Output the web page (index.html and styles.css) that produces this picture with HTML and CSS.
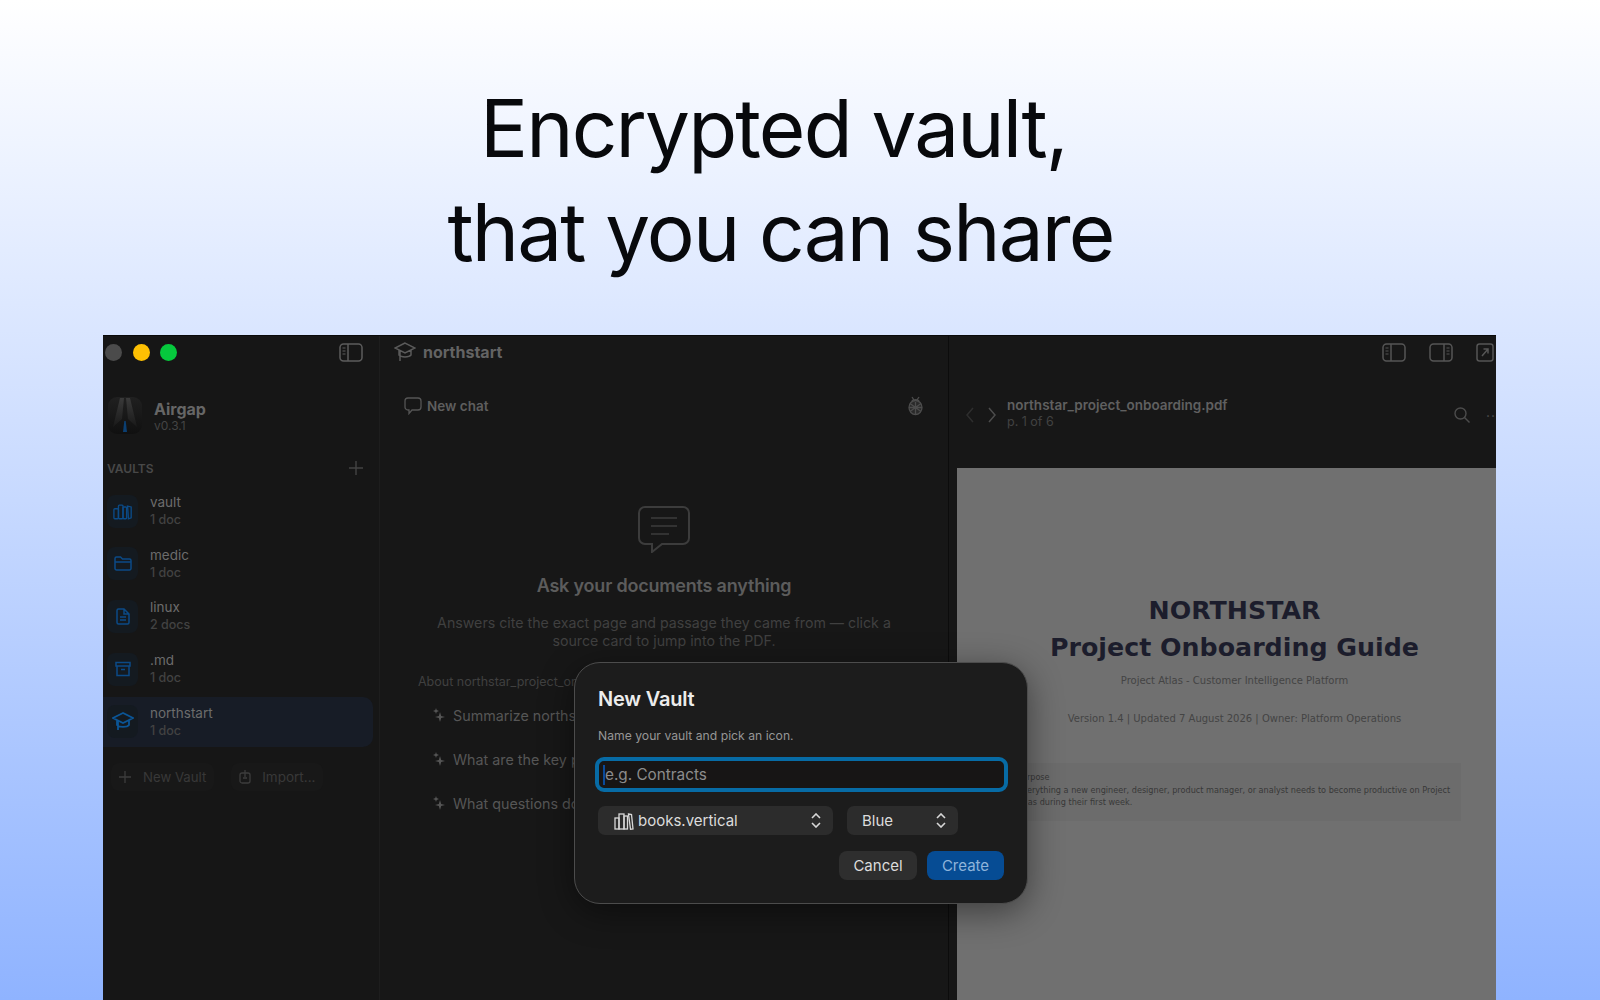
FILE: index.html
```html
<!DOCTYPE html>
<html lang="en">
<head>
<meta charset="utf-8">
<title>Airgap - Encrypted vault</title>
<link rel="stylesheet" href="styles.css">
</head>
<body>
<header class="hero">
  <h1><span class="line-one">Encrypted vault,</span><span class="line-two">that you can share</span></h1>
</header>
<main class="window">
  <aside class="sidebar">
    <div class="titlebar">
      <div class="lights"><i class="light gray"></i><i class="light yellow"></i><i class="light green"></i></div>
      <svg class="tool" width="24" height="19" viewBox="0 0 24 19" fill="none" stroke="#5c5c5c" stroke-width="1.5"><rect x="1" y="1" width="22" height="17" rx="3.5"/><path d="M9 1v17"/><path d="M3.5 5h3M3.5 8h3M3.5 11h3" stroke-width="1.2"/></svg>
    </div>
    <div class="brand">
      <svg class="logo" width="36" height="38" viewBox="0 0 36 38"><defs><linearGradient id="lg" x1="0" y1="0" x2="0" y2="1"><stop offset="0" stop-color="#202020"/><stop offset="1" stop-color="#101010"/></linearGradient><linearGradient id="beam" x1="0" y1="0" x2="0" y2="1"><stop offset="0" stop-color="#3a3a3a"/><stop offset="1" stop-color="#191919"/></linearGradient></defs><rect x="1" y="0" width="34" height="37" rx="9" fill="url(#lg)"/><path d="M13 1 6 30l9-8 2-21z" fill="url(#beam)"/><path d="M23 1l7 29-9-8-2-21z" fill="url(#beam)"/><path d="M17.300 24h1.400l1.300 11h-4z" fill="#0b3f72"/></svg>
      <div class="brand-text"><strong>Airgap</strong><span>v0.3.1</span></div>
    </div>
    <div class="section-head"><span>VAULTS</span><svg width="14" height="14" viewBox="0 0 14 14" stroke="#434343" stroke-width="1.4"><path d="M7 0v14M0 7h14"/></svg></div>
    <ul class="vaults">
      <li class="vault">
        <span class="vault-icon"><svg width="20" height="17" viewBox="0 0 22 18" fill="none" stroke="#0b4a86" stroke-width="1.500"><rect x="1" y="6" width="5" height="11" rx="1"/><rect x="6" y="2" width="5" height="15" rx="1"/><rect x="11" y="4" width="4" height="13" rx="1"/><path d="m16 3 4 1 0 12-3 1z"/></svg></span>
        <span class="vault-text"><b>vault</b><small>1 doc</small></span>
      </li>
      <li class="vault">
        <span class="vault-icon"><svg width="18" height="15" viewBox="0 0 18 15" fill="none" stroke="#0b4a86" stroke-width="1.500"><path d="M1 4V2.500A1.500 1.500 0 0 1 2.500 1h4l2 2h7A1.500 1.500 0 0 1 17 4.500v8a1.500 1.500 0 0 1-1.500 1.500h-13A1.500 1.500 0 0 1 1 12.500zM1 6h16"/></svg></span>
        <span class="vault-text"><b>medic</b><small>1 doc</small></span>
      </li>
      <li class="vault">
        <span class="vault-icon"><svg width="14" height="17" viewBox="0 0 14 17" fill="none" stroke="#0b4a86" stroke-width="1.500"><path d="M2.500 1H8l5 5v8.500a1.500 1.500 0 0 1-1.500 1.500h-9A1.500 1.500 0 0 1 1 14.500v-12A1.500 1.500 0 0 1 2.500 1zM8 1v5h5M4 9h6M4 12h6"/></svg></span>
        <span class="vault-text"><b>linux</b><small>2 docs</small></span>
      </li>
      <li class="vault">
        <span class="vault-icon"><svg width="16" height="16" viewBox="0 0 16 16" fill="none" stroke="#0b4a86" stroke-width="1.500"><path d="M1 1.500h14V5H1zM2 5v9.500h12V5M6 8.500h4"/></svg></span>
        <span class="vault-text"><b>.md</b><small>1 doc</small></span>
      </li>
      <li class="vault selected">
        <span class="vault-icon"><svg width="22" height="19" viewBox="0 0 22 19" fill="none" stroke="#0b5596" stroke-width="1.800"><path d="M11 1 1 6l10 5 10-5zM5 8.500V13c2 2.500 10 2.500 12 0V8.500M6 9v9"/></svg></span>
        <span class="vault-text"><b>northstart</b><small>1 doc</small></span>
      </li>
    </ul>
    <div class="side-actions">
      <span class="side-action"><svg width="12" height="12" viewBox="0 0 12 12" stroke="#3c3c3c" stroke-width="1.300"><path d="M6 0v12M0 6h12"/></svg>New Vault</span>
      <span class="side-action import"><svg width="12" height="14" viewBox="0 0 12 14" fill="none" stroke="#3c3c3c" stroke-width="1.300"><rect x="1" y="3" width="10" height="10" rx="2"/><path d="M6 0v7M4 8h4"/></svg>Import...</span>
    </div>
  </aside>

  <section class="chat">
    <div class="titlebar chat-title">
      <svg width="22" height="20" viewBox="0 0 22 20" fill="none" stroke="#5a5a5a" stroke-width="1.500"><path d="M11 1 1 6l10 5 10-5zM5 8.500V13c2 2.500 10 2.500 12 0V8.500M6 9v10"/></svg>
      <strong>northstart</strong>
    </div>
    <div class="chat-bar">
      <span class="new-chat"><svg width="18" height="18" viewBox="0 0 18 18" fill="none" stroke="#555" stroke-width="1.300"><path d="M4 1h10a3 3 0 0 1 3 3v6a3 3 0 0 1-3 3H8l-3 3.500V13H4a3 3 0 0 1-3-3V4a3 3 0 0 1 3-3z"/></svg>New chat</span>
      <svg width="17" height="20" viewBox="0 0 17 20" fill="none" stroke="#4c4c4c" stroke-width="1.300"><ellipse cx="8.500" cy="11.500" rx="6.500" ry="7" fill="#2a2a2a"/><path d="M5 5.500C5 3 12 3 12 5.500M5 1l2 3M12 1l-2 3M8.500 6v12M2 11.500h13M3 7.500l11 8M14 7.500l-11 8"/></svg>
    </div>
    <div class="empty">
      <svg width="52" height="47" viewBox="0 0 52 47" fill="none" stroke="#3c3c3c" stroke-width="2"><path d="M7 1h38a6 6 0 0 1 6 6v25a6 6 0 0 1-6 6H24l-10 8v-8H7a6 6 0 0 1-6-6V7a6 6 0 0 1 6-6z"/><path d="M13 12h26M13 20h26M13 28h18" stroke-width="1.500"/></svg>
      <h2>Ask your documents anything</h2>
      <p>Answers cite the exact page and passage they came from — click a source card to jump into the PDF.</p>
    </div>
    <div class="suggest">
      <div class="suggest-label">About northstar_project_onboarding.pdf</div>
      <div class="suggest-item"><svg class="spark" width="12" height="14" viewBox="0 0 12 14" fill="#555"><path d="M7 4 8.200 8 12 9 8.200 10 7 14 5.800 10 2 9 5.800 8zM3 0l.7 2L6 3l-2.300 1L3 6 2.300 4 0 3l2.300-1z"/></svg>Summarize northstar_project_onboarding.pdf</div>
      <div class="suggest-item"><svg class="spark" width="12" height="14" viewBox="0 0 12 14" fill="#555"><path d="M7 4 8.200 8 12 9 8.200 10 7 14 5.800 10 2 9 5.800 8zM3 0l.7 2L6 3l-2.300 1L3 6 2.300 4 0 3l2.300-1z"/></svg>What are the key points in this document?</div>
      <div class="suggest-item"><svg class="spark" width="12" height="14" viewBox="0 0 12 14" fill="#555"><path d="M7 4 8.200 8 12 9 8.200 10 7 14 5.800 10 2 9 5.800 8zM3 0l.7 2L6 3l-2.300 1L3 6 2.300 4 0 3l2.300-1z"/></svg>What questions does this document answer?</div>
    </div>
  </section>

  <section class="viewer">
    <div class="titlebar viewer-tools">
      <svg width="24" height="19" viewBox="0 0 24 19" fill="none" stroke="#555" stroke-width="1.500"><rect x="1" y="1" width="22" height="17" rx="3.500"/><path d="M9 1v17"/><path d="M3.500 5h3M3.500 8h3M3.500 11h3" stroke-width="1.200"/></svg>
      <svg width="24" height="19" viewBox="0 0 24 19" fill="none" stroke="#555" stroke-width="1.500"><rect x="1" y="1" width="22" height="17" rx="3.500"/><path d="M15 1v17"/><path d="M17.500 5h3M17.500 8h3M17.500 11h3" stroke-width="1.200"/></svg>
      <svg width="18" height="19" viewBox="0 0 18 19" fill="none" stroke="#555" stroke-width="1.500"><rect x="1" y="1" width="16" height="17" rx="2.500"/><path d="M6 13l6-7M7.500 6H12v4.500"/></svg>
    </div>
    <div class="viewer-bar">
      <svg width="10" height="16" viewBox="0 0 10 16" fill="none" stroke="#2e2e2e" stroke-width="1.500"><path d="M8 1 2 8l6 7"/></svg>
      <svg class="next" width="10" height="16" viewBox="0 0 10 16" fill="none" stroke="#4c4c4c" stroke-width="1.500"><path d="m2 1 6 7-6 7"/></svg>
      <div class="file"><strong>northstar_project_onboarding.pdf</strong><span>p. 1 of 6</span></div>
      <svg class="search" width="16" height="16" viewBox="0 0 16 16" fill="none" stroke="#4c4c4c" stroke-width="1.400"><circle cx="6.500" cy="6.500" r="5.500"/><path d="m10.500 10.500 5 5"/></svg>
      <span class="dots">··</span>
    </div>
    <article class="page">
      <h3>NORTHSTAR<br>Project Onboarding Guide</h3>
      <p class="page-sub">Project Atlas - Customer Intelligence Platform</p>
      <p class="page-meta">Version 1.4 | Updated 7 August 2026 | Owner: Platform Operations</p>
      <div class="purpose">
        <b>Purpose</b>
        Everything a new engineer, designer, product manager, or analyst needs to become productive on Project Atlas during their first week.
      </div>
    </article>
  </section>

  <div class="dialog">
    <h4>New Vault</h4>
    <p class="dialog-sub">Name your vault and pick an icon.</p>
    <div class="field"><i class="caret"></i><span>e.g. Contracts</span></div>
    <div class="selects">
      <div class="select wide">
        <svg width="20" height="18" viewBox="0 0 20 18" fill="none" stroke="#d8d8d8" stroke-width="1.300"><rect x="1" y="6" width="4" height="11"/><rect x="5" y="2" width="5" height="15"/><rect x="10" y="4" width="3.500" height="13"/><path d="m14.500 2 3 .5L19 17l-2.500.2z"/></svg>
        <span>books.vertical</span>
        <svg class="updown" width="10" height="15" viewBox="0 0 10 15" fill="none" stroke="#d8d8d8" stroke-width="1.600"><path d="m1 5 4-4 4 4M1 10l4 4 4-4"/></svg>
      </div>
      <div class="select narrow">
        <span>Blue</span>
        <svg class="updown" width="10" height="15" viewBox="0 0 10 15" fill="none" stroke="#d8d8d8" stroke-width="1.600"><path d="m1 5 4-4 4 4M1 10l4 4 4-4"/></svg>
      </div>
    </div>
    <div class="buttons">
      <span class="btn cancel">Cancel</span>
      <span class="btn create">Create</span>
    </div>
  </div>
</main>
</body>
</html>
```
FILE: styles.css
```css
* { box-sizing: border-box; }
html, body { margin: 0; height: 1000px; overflow: hidden; }
body {
  width: 1600px;
  font-family: Inter, "Liberation Sans", sans-serif;
  background: linear-gradient(180deg, #ffffff 0%, #8fb3ff 100%);
  display: flex;
  flex-direction: column;
}
.hero { height: 335px; flex: none; padding: 76px 46px 0 0; }
h1 {
  margin: 0;
  text-align: center;
  font-size: 80px;
  line-height: 104px;
  font-weight: 400;
  letter-spacing: -1.850px;
  color: #08090c;
}
.line-one { display: block; padding-right: 7px; }
.line-two { display: block; padding-left: 7px; }
.window {
  position: relative;
  flex: none;
  width: 1393px;
  height: 665px;
  margin-left: 103px;
  display: flex;
  background: #171717;
  border-top: 1px solid #0a0a0a;
  overflow: hidden;
}
.sidebar {
  width: 277px;
  flex: none;
  background: #161616;
  border-right: 1px solid #1d1d1d;
  display: flex;
  flex-direction: column;
}
.titlebar { height: 34px; display: flex; align-items: center; padding-bottom: 2px; }
.sidebar .titlebar { justify-content: space-between; padding-right: 16px; padding-left: 2px; }
.lights { display: flex; gap: 10.500px; }
.light { width: 17px; height: 17px; border-radius: 50%; display: block; }
.gray { background: #4b4b4b; }
.yellow { background: #fdc003; }
.green { background: #06c93d; }
.brand { display: flex; align-items: center; gap: 11px; padding: 27px 0 0 4px; }
.brand-text { display: flex; flex-direction: column; }
.brand-text strong { font-size: 16px; line-height: 20px; font-weight: 700; color: #666; }
.brand-text span { font-size: 12px; line-height: 14px; color: #444; }
.section-head { display: flex; justify-content: space-between; align-items: center; height: 20px; margin-top: 23px; padding: 0 16px 0 4px; font-size: 12px; font-weight: 600; color: #484848; }
.vaults { list-style: none; margin: 7px 0 0; padding: 0; }
.vault { height: 52.600px; display: flex; align-items: center; gap: 12px; padding-left: 4px; width: 270px; border-radius: 0 10px 10px 0; }
.vault.selected { background: #171c26; height: 50px; margin-top: 1.500px; }
.vault-icon { width: 31px; height: 33px; border-radius: 8px; background: #141a20; display: flex; align-items: center; justify-content: center; flex: none; }
.vault-text { display: flex; flex-direction: column; }
.vault-text b { font-size: 13.500px; line-height: 17px; font-weight: 400; color: #6c6c6c; }
.vault-text small { font-size: 12.500px; line-height: 17px; color: #424242; font-weight: 500; }
.side-actions { display: flex; gap: 17px; margin-top: 16px; padding-left: 8px; }
.side-action { display: flex; align-items: center; gap: 12px; height: 28px; padding: 0 8px; border-radius: 8px; background: #181818; font-size: 13.200px; color: #383838; }
.import { gap: 11px; font-size: 13.500px; }

.chat { width: 569px; flex: none; position: relative; border-right: 1px solid #0c0c0c; }
.chat-title { gap: 7px; padding-left: 14px; }
.chat-title strong { font-size: 16px; font-weight: 700; color: #636363; }
.chat-bar { display: flex; justify-content: space-between; align-items: center; height: 30px; margin-top: 21px; padding: 0 24px; }
.new-chat { display: flex; align-items: center; gap: 5px; font-size: 13.500px; font-weight: 600; color: #5e5e5e; }
.empty { display: flex; flex-direction: column; align-items: center; text-align: center; padding-top: 85px; }
.empty h2 { margin: 21px 0 0; font-size: 18px; line-height: 24px; font-weight: 600; color: #5c5c5c; letter-spacing: -0.2px; }
.empty p { margin: 16px 0 0; width: 480px; font-size: 14.200px; line-height: 18px; color: #404040; }
.suggest { padding: 24px 0 0 38px; }
.suggest-label { font-size: 12.500px; line-height: 16px; color: #404040; white-space: nowrap; }
.suggest-item { display: flex; align-items: center; gap: 8px; height: 44.200px; padding-left: 15px; font-size: 14.300px; color: #565656; white-space: nowrap; }
.suggest-label + .suggest-item { margin-top: 3px; }

.viewer { flex: 1; min-width: 0; }
.viewer-tools { justify-content: flex-end; gap: 23px; padding-right: 2px; }
.viewer-bar { display: flex; align-items: center; height: 44px; margin-top: 23px; padding-left: 16px; }
.next { margin-left: 12px; }
.file { display: flex; flex-direction: column; margin: 0 0 3px 10px; }
.file strong { font-size: 13.500px; line-height: 17px; font-weight: 600; color: #606060; }
.file span { font-size: 12.500px; line-height: 16px; color: #424242; }
.search { margin-left: auto; }
.dots { margin: 0 -4px 0 16px; color: #4c4c4c; font-size: 14px; letter-spacing: 1px; width: 14px; }
.page {
  width: 555px;
  height: 560px;
  margin: 31px 0 0 8px;
  background: #707070;
  padding: 125px 51px 0;
  text-align: center;
  font-family: "DejaVu Sans", sans-serif;
  color: #444;
}
.page h3 { margin: 0; font-size: 25.300px; line-height: 36.500px; font-weight: 700; color: #1c1d2c; }
.page-sub { margin: 8px 0 0; font-size: 10px; line-height: 14px; }
.page-meta { margin: 24px 0 0; font-size: 10px; line-height: 14px; }
.purpose { margin-top: 37px; height: 58px; padding: 8px 4px 0 9px; background: #6c6c6c; text-align: left; font-size: 8.150px; line-height: 12.500px; color: #383838; }
.purpose b { display: block; font-weight: 400; }

.dialog {
  position: absolute;
  left: 471px;
  top: 326px;
  width: 454px;
  height: 242px;
  padding: 23px 20px 0 23px;
  background: #1c1c1c;
  border: 1.500px solid #4c4c4c;
  border-radius: 26px;
  box-shadow: 0 8px 34px rgba(0,0,0,.45);
  display: flex;
  flex-direction: column;
}
.dialog h4 { margin: 0; font-size: 20px; line-height: 26px; font-weight: 600; color: #ececec; letter-spacing: -0.2px; }
.dialog-sub { margin: 16px 0 0; font-size: 12.200px; line-height: 16px; color: #969696; }
.field {
  margin: 13px 0 0 -3px;
  height: 35px;
  width: 413px;
  border: 4px solid #076ba5;
  border-radius: 9px;
  background: #171515;
  display: flex;
  align-items: center;
  padding-left: 4px;
  font-size: 15.300px;
  color: #8c8c8c;
}
.caret { width: 2px; height: 20px; background: #0a4a9a; flex: none; }
.selects { display: flex; gap: 14px; margin-top: 14px; }
.select { height: 29px; background: #2c2c2c; border-radius: 7px; display: flex; align-items: center; font-size: 15px; color: #dcdcdc; position: relative; }
.wide { width: 235px; padding-left: 16px; gap: 4px; }
.narrow { width: 111px; padding-left: 15px; }
.updown { position: absolute; right: 12px; }
.buttons { display: flex; justify-content: flex-end; gap: 10px; margin-top: 16px; padding-right: 3px; }
.btn { width: 78px; height: 29px; border-radius: 8px; display: flex; align-items: center; justify-content: center; font-size: 15px; }
.cancel { background: #2e2e2e; color: #dcdcdc; }
.create { width: 77px; background: #064c94; color: #8fb4da; }
```
